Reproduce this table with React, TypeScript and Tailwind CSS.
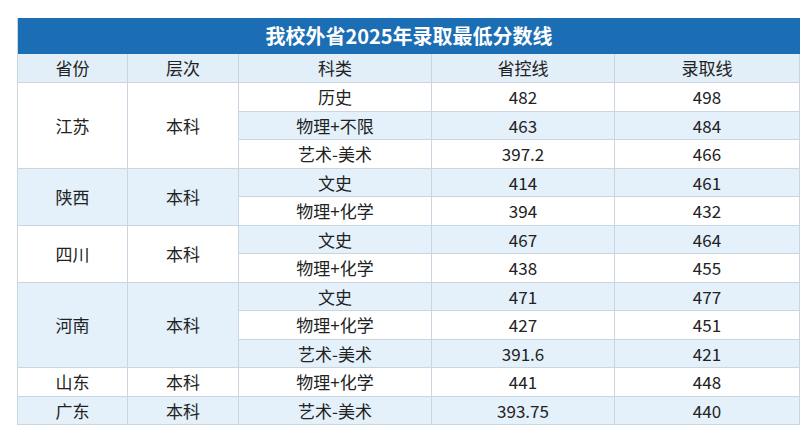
import React from 'react';

type Sub = { kind: string; ctrl: string; line: string };
type Group = { prov: string; level: string; subs: Sub[] };

const groups: Group[] = [
  {
    prov: '江苏',
    level: '本科',
    subs: [
      { kind: '历史', ctrl: '482', line: '498' },
      { kind: '物理+不限', ctrl: '463', line: '484' },
      { kind: '艺术-美术', ctrl: '397.2', line: '466' },
    ],
  },
  {
    prov: '陕西',
    level: '本科',
    subs: [
      { kind: '文史', ctrl: '414', line: '461' },
      { kind: '物理+化学', ctrl: '394', line: '432' },
    ],
  },
  {
    prov: '四川',
    level: '本科',
    subs: [
      { kind: '文史', ctrl: '467', line: '464' },
      { kind: '物理+化学', ctrl: '438', line: '455' },
    ],
  },
  {
    prov: '河南',
    level: '本科',
    subs: [
      { kind: '文史', ctrl: '471', line: '477' },
      { kind: '物理+化学', ctrl: '427', line: '451' },
      { kind: '艺术-美术', ctrl: '391.6', line: '421' },
    ],
  },
  {
    prov: '山东',
    level: '本科',
    subs: [{ kind: '物理+化学', ctrl: '441', line: '448' }],
  },
  {
    prov: '广东',
    level: '本科',
    subs: [{ kind: '艺术-美术', ctrl: '393.75', line: '440' }],
  },
];

const cell = 'flex items-center justify-center border-r border-b border-[#c9d5df]';
const spans = ['row-span-1', 'row-span-2', 'row-span-3'];

const App = () => {
  let idx = 0;
  return (
    <div
      className="w-[806px] h-[434px] bg-white pt-[18px] pl-[17px] text-[17px] text-[#222]"
      style={{ fontFamily: '"Noto Sans CJK SC", "Noto Sans", sans-serif' }}
    >
      <div className="grid w-[782px] grid-cols-[110px_111px_193px_183px_185px] grid-rows-[36px_29px] auto-rows-[28.5px] border-l border-[#c9d5df]">
        {/* Title */}
        <div className="col-span-5 bg-[#1b6db4] flex items-center justify-center text-white text-[20px] font-bold">
          我校外省2025年录取最低分数线
        </div>

        {/* Header */}
        {['省份', '层次', '科类', '省控线', '录取线'].map((h) => (
          <div key={h} className={`${cell} bg-[#e2eff9]`}>
            {h}
          </div>
        ))}

        {groups.map((g, gi) => {
          const span = spans[g.subs.length - 1];
          const gbg = gi % 2 === 0 ? 'bg-white' : 'bg-[#e4f0fa]';
          const rows = g.subs.map((s, si) => {
            const bg = idx % 2 === 0 ? 'bg-white' : 'bg-[#e4f0fa]';
            idx++;
            return (
              <React.Fragment key={`${gi}-${si}`}>
                <div className={`${cell} ${bg}`}>{s.kind}</div>
                <div className={`${cell} ${bg}`}>{s.ctrl}</div>
                <div className={`${cell} ${bg}`}>{s.line}</div>
              </React.Fragment>
            );
          });
          return (
            <React.Fragment key={g.prov}>
              <div className={`${cell} ${gbg} ${span} col-start-1`}>{g.prov}</div>
              <div className={`${cell} ${gbg} ${span} col-start-2`}>{g.level}</div>
              {rows}
            </React.Fragment>
          );
        })}
      </div>
    </div>
  );
};

export default App;
